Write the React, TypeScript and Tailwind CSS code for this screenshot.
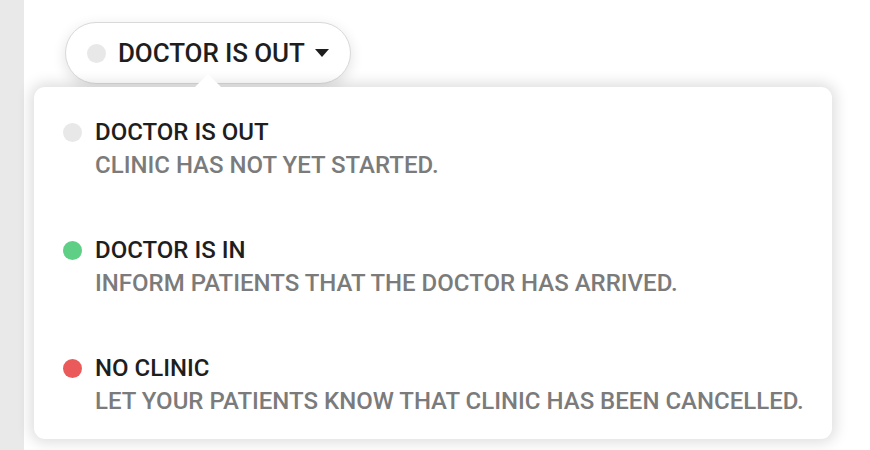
import React from 'react'

type Status = {
	id: string,
	title: string,
	description: string,
	dot: string
}

const statuses: Status[] = [
	{ id: 'out', title: 'DOCTOR IS OUT', description: 'CLINIC HAS NOT YET STARTED.', dot: 'bg-[#e8e8e8]' },
	{ id: 'in', title: 'DOCTOR IS IN', description: 'INFORM PATIENTS THAT THE DOCTOR HAS ARRIVED.', dot: 'bg-[#5ecf85]' },
	{ id: 'none', title: 'NO CLINIC', description: 'LET YOUR PATIENTS KNOW THAT CLINIC HAS BEEN CANCELLED.', dot: 'bg-[#ea5a5a]' },
]

const StatusItem: React.FunctionComponent<{status: Status}> = ({status}) => {
	return (
		<li className="flex items-start gap-[13px]">
			<span className={`mt-[5px] h-[19px] w-[19px] shrink-0 rounded-full ${status.dot}`} />
			<div>
				<div className="text-[24px] font-medium leading-[28px] text-[#1e1e1e]">{status.title}</div>
				<div className="mt-[5px] text-[24px] font-medium leading-[28px] text-[#7b7b7b]">{status.description}</div>
			</div>
		</li>
	)
}

export default function App() {
	return (
		<div className="flex h-[450px] w-[870px] overflow-hidden bg-white font-['Roboto',sans-serif]">
			<div className="w-[24px] shrink-0 bg-[#e9e9e9]" />
			<div className="relative flex-1 pl-[10px] pt-[22px]">
				<button className="ml-[31px] flex h-[62px] items-center rounded-full border border-[#d9d9d9] bg-white pl-[21px] pr-[21px] shadow-[0_4px_14px_rgba(0,0,0,0.12)]">
					<span className="h-[19px] w-[19px] rounded-full bg-[#e8e8e8]" />
					<span className="ml-[12px] text-[26px] font-medium leading-[30px] tracking-[-0.1px] text-[#1e1e1e]">DOCTOR IS OUT</span>
					<svg className="ml-[10px] h-[8px] w-[14px]" viewBox="0 0 14 8" aria-hidden="true">
						<path d="M0 0h14L7 8z" fill="#1e1e1e" />
					</svg>
				</button>
				<div className="relative z-10 mt-[3px] w-[798px] rounded-[11px] bg-white pb-[24px] pl-[29px] pt-[31px] shadow-[0_0_14px_4px_rgba(0,0,0,0.13)]">
					<svg className="absolute left-[160px] top-[-13px] h-[14px] w-[28px]" viewBox="0 0 28 14" aria-hidden="true">
						<path d="M0 14L14 0l14 14z" fill="#ffffff" />
					</svg>
					<ul className="flex flex-col gap-[57px]">
						{statuses.map((s) => <StatusItem key={s.id} status={s} />)}
					</ul>
				</div>
			</div>
		</div>
	)
}
